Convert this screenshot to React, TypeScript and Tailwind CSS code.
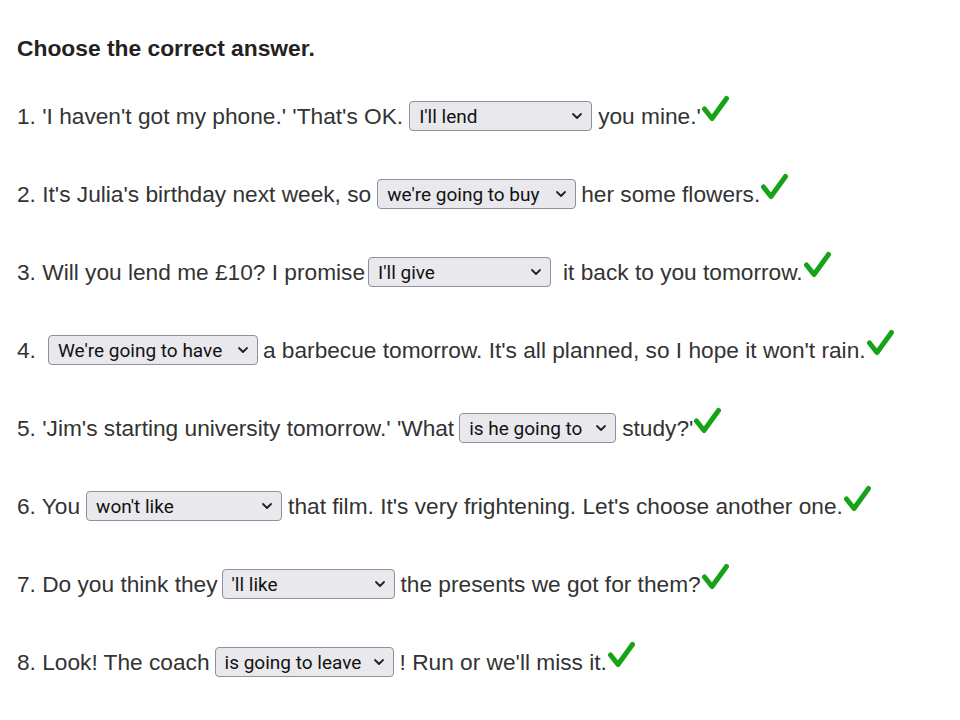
import React from "react";

type Row = { pre: string; sel: string; w: number; post: string; gapL?: number; gapR?: number };

const rows: Row[] = [
  { pre: "1. 'I haven't got my phone.' 'That's OK.", sel: "I'll lend", w: 183, post: "you mine.'", gapL: 6, gapR: 6 },
  { pre: "2. It's Julia's birthday next week, so", sel: "we're going to buy", w: 199, post: "her some flowers.", gapL: 6, gapR: 5 },
  { pre: "3. Will you lend me £10? I promise", sel: "I'll give", w: 183, post: "it back to you tomorrow.", gapL: 3, gapR: 12 },
  { pre: "4.", sel: "We're going to have", w: 210, post: "a barbecue tomorrow. It's all planned, so I hope it won't rain.", gapL: 12, gapR: 5 },
  { pre: "5. 'Jim's starting university tomorrow.' 'What", sel: "is he going to", w: 157, post: "study?'", gapL: 5, gapR: 6 },
  { pre: "6. You", sel: "won't like", w: 196, post: "that film. It's very frightening. Let's choose another one.", gapL: 6, gapR: 6 },
  { pre: "7. Do you think they", sel: "'ll like", w: 173, post: "the presents we got for them?", gapL: 4, gapR: 6 },
  { pre: "8. Look! The coach", sel: "is going to leave", w: 179, post: "! Run or we'll miss it.", gapL: 5, gapR: 6 },
];

function Check() {
  return (
    <svg width="28" height="27" viewBox="0 0 28 27" className="inline-block shrink-0 -mt-[15px]">
      <path d="M3.5 14 L11 23.5 L25.5 3.5" fill="none" stroke="#17a317" strokeWidth="5" strokeLinecap="round" strokeLinejoin="round" />
    </svg>
  );
}

function Select({ label, w }: { label: string; w: number }) {
  return (
    <div
      className="inline-flex h-[30px] shrink-0 items-center justify-between rounded-[4px] border border-[#8f8f9d] bg-[#e9e9ed] pl-[9px] pr-[8px] text-[19px] text-[#111]"
      style={{ width: w, fontFamily: "Roboto, 'Noto Sans', sans-serif" }}
    >
      <span className="whitespace-pre pt-[3px]">{label}</span>
      <svg width="12" height="8" viewBox="0 0 12 8">
        <path d="M2 2 L6 6 L10 2" fill="none" stroke="#222" strokeWidth="1.8" strokeLinecap="round" strokeLinejoin="round" />
      </svg>
    </div>
  );
}

export default function App() {
  return (
    <div className="h-[720px] w-[960px] overflow-hidden bg-white pl-[17px] pt-[38px] text-[#333]" style={{ fontFamily: "'Liberation Sans', Arial, sans-serif" }}>
      <div className="mb-[19px] h-[20px] text-[22.8px] font-bold leading-[20px] text-[#222]">Choose the correct answer.</div>
      {rows.map((r, i) => (
        <div key={i} className="flex h-[78px] items-center whitespace-pre text-[22.7px]">
          <span>{r.pre}</span>
          <span style={{ width: r.gapL }} className="shrink-0" />
          <Select label={r.sel} w={r.w} />
          <span style={{ width: r.gapR }} className="shrink-0" />
          <span>{r.post}</span>
          <Check />
        </div>
      ))}
    </div>
  );
}
